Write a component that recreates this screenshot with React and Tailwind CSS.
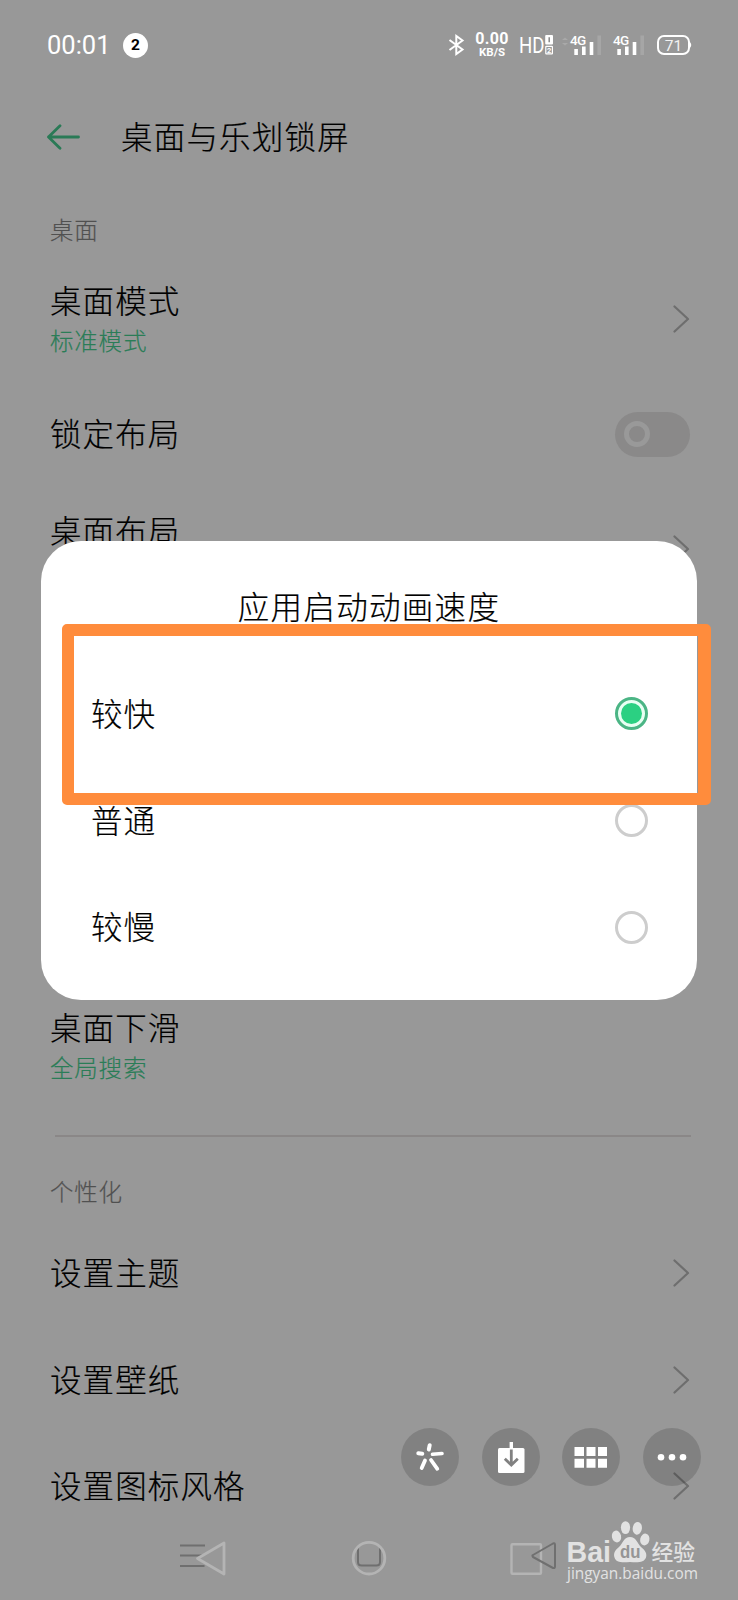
import React from "react";

const options = [
  { label: "较快", checked: true },
  { label: "普通", checked: false },
  { label: "较慢", checked: false },
];

const personalRows = ["设置主题", "设置壁纸", "设置图标风格"];

const Chevron = () => (
  <svg width="17" height="28" viewBox="0 0 17 28" fill="none" className="mr-[1px] shrink-0">
    <path d="M1.5 1.5 L15 14 L1.5 26.5" stroke="#6e6e6e" strokeWidth="2.2" strokeLinecap="round" strokeLinejoin="round" />
  </svg>
);

const Signal = ({ faint }) => (
  <svg width="33" height="22" viewBox="0 0 33 22" fill="#fff" className="overflow-visible shrink-0">
    {faint && <path d="M-8 6 l3 -2.5 l3 2.5z M-8 9 l3 2.5 l3 -2.5z" fill="#a9a9a9" />}
    <text x="0" y="11" fontSize="13.5" fontFamily="Roboto" fontWeight="500" letterSpacing="-0.6">4G</text>
    <rect x="4.3" y="15" width="3.6" height="6" />
    <rect x="12" y="12.5" width="3.6" height="8.5" />
    <rect x="19.7" y="8" width="3.6" height="13" />
    <rect x="27.4" y="1.5" width="3.6" height="19.5" fill="#a6a6a6" />
  </svg>
);

const StatusBar = () => (
  <div className="flex h-[90px] items-center pl-[47px] pr-[46px] font-[Roboto] font-normal text-white">
    <span className="mt-[2px] w-[76px] text-[25.5px] leading-none">00:01</span>
    <span className="flex h-[25px] w-[25px] items-center justify-center rounded-full bg-white pt-[1px] text-[15.5px] font-bold leading-none text-black">
      2
    </span>
    <div className="ml-auto flex items-center">
      <svg width="17" height="22" viewBox="0 0 17 22" fill="none" stroke="#fff" strokeWidth="2" strokeLinejoin="miter">
        <path d="M1.5 6 L14.5 15.5 L8.3 20 V2 L14.5 6.5 L1.5 16" />
      </svg>
      <div className="ml-[10px] w-[34px] text-center font-bold leading-none">
        <div className="text-[16px] leading-[13px] tracking-[0.3px]">0.00</div>
        <div className="mt-[2px] text-[11.5px] leading-[11px]">KB/S</div>
      </div>
      <svg width="35" height="22" viewBox="0 0 35 22" fill="#fff" className="ml-[10px] overflow-visible">
        <text x="0" y="19" fontSize="22" fontFamily="Roboto" textLength="25.5" lengthAdjust="spacingAndGlyphs">HD</text>
        <rect x="26.2" y="1" width="7.8" height="9.5" rx="1" />
        <rect x="26.8" y="12.3" width="6.6" height="7.6" rx="0.5" fill="none" stroke="#fff" strokeWidth="1.2" />
        <path d="M30.2 3.2 V8.2" stroke="#808080" strokeWidth="1.4" />
        <text x="28.1" y="19" fontSize="7.5" fontFamily="Roboto" fontWeight="700">2</text>
      </svg>
      <div className="ml-[16px] flex gap-[10px]">
        <Signal faint />
        <Signal />
      </div>
      <svg width="35" height="20" viewBox="0 0 35 20" fill="none" className="ml-[11px]">
        <rect x="1" y="1" width="31" height="18" rx="6" stroke="#fff" strokeWidth="2" />
        <path d="M32.5 6.5 Q36 10 32.5 13.5z" fill="#fff" />
        <text x="16.4" y="15.5" fontSize="15.5" fontFamily="Roboto" fontWeight="400" textAnchor="middle" fill="#f2f2f2">71</text>
      </svg>
    </div>
  </div>
);

const SettingRow = ({ title, value, className, children }) => (
  <div className={"flex items-center justify-between pl-[50px] pr-[47px] " + className}>
    <div>
      <div className="-mt-[2px] mb-[2px] text-[31.5px] leading-[42px] tracking-[1.1px]">{title}</div>
      {value && <div className="text-[23.5px] leading-[36px] tracking-[0.8px] text-[#2a7d57]">{value}</div>}
    </div>
    {children}
  </div>
);

const Toggle = () => (
  <div className="mr-[1px] flex h-[45px] w-[75px] items-center rounded-full bg-[#8a8989] pl-[9px]">
    <div className="h-[26px] w-[26px] rounded-full border-[5px] border-[#999]"></div>
  </div>
);

const Radio = ({ checked }) =>
  checked ? (
    <div className="mb-[1px] flex h-[33px] w-[33px] items-center justify-center rounded-full border-[3px] border-[#4bb585] bg-[#e8fff3]">
      <div className="h-[21px] w-[21px] rounded-full bg-[#2bd082]"></div>
    </div>
  ) : (
    <div className="h-[33px] w-[33px] rounded-full border-[3px] border-[#cdcdcd]"></div>
  );

const SpeedDialog = () => (
  <div className="absolute left-[41px] top-[541px] h-[459px] w-[656px] rounded-[40px] bg-white pt-[43px]">
    <h2 className="text-center text-[31.5px] font-light leading-[42px] tracking-[1.3px]">应用启动动画速度</h2>
    <div className="mt-[35px]">
      {options.map((option) => (
        <div key={option.label} className="flex h-[106.5px] items-center justify-between pl-[50px] pr-[49px]">
          <span className="-mt-[2px] mb-[2px] text-[31.5px] leading-[42px] tracking-[1.1px]">{option.label}</span>
          <Radio checked={option.checked} />
        </div>
      ))}
    </div>
  </div>
);

const FloatingButton = ({ children }) => (
  <button className="flex h-[58px] w-[58px] items-center justify-center rounded-full bg-black/15">
    <svg width="34" height="34" viewBox="0 0 34 34" fill="#fff">
      {children}
    </svg>
  </button>
);

const FloatingTools = () => (
  <div className="absolute left-[401px] top-[1428px] flex gap-[22.6px]">
    <FloatingButton>
      <g stroke="#fff" strokeLinecap="round">
        <path d="M16.7 5.2 L15.8 9.5" strokeWidth="4" />
        <path d="M5.3 13.2 L9.3 13.8" strokeWidth="4" />
        <path d="M19.5 14.3 L29 13.5" strokeWidth="3.6" />
        <path d="M12 20.5 L8.7 28" strokeWidth="3.8" />
        <path d="M18 20 L24.3 28.8" strokeWidth="3.8" />
      </g>
    </FloatingButton>
    <FloatingButton>
      <rect x="4" y="8" width="26.5" height="25" rx="1.5" />
      <rect x="15.6" y="2" width="3.4" height="8" />
      <path d="M17.3 9.5 V25 M10.8 18.8 L17.3 25 L23.8 18.8" fill="none" stroke="#818181" strokeWidth="2.8" />
    </FloatingButton>
    <FloatingButton>
      <path d="M0.5 7h9.5v9H0.5z M12.5 7h9v9h-9z M24 7h9v9h-9z M0.5 18.7h9.5v9H0.5z M12.5 18.7h9v9h-9z M24 18.7h9v9h-9z" />
    </FloatingButton>
    <FloatingButton>
      <circle cx="6" cy="17.3" r="3.3" />
      <circle cx="17" cy="17.3" r="3.3" />
      <circle cx="28" cy="17.3" r="3.3" />
    </FloatingButton>
  </div>
);

const NavBar = () => (
  <div className="absolute left-[179px] top-[1538px] flex items-center">
    <svg width="48" height="40" viewBox="0 0 48 40" fill="none">
      <path d="M1 7.5h25 M1 17.5h23 M1 28h24.5" stroke="#6f6f6f" strokeWidth="1.8" />
      <path d="M18.5 20.5 L45 5 V36z" fill="#989898" stroke="#b4b4b4" strokeWidth="2.8" strokeLinejoin="round" />
    </svg>
    <svg width="36" height="40" viewBox="0 0 36 40" fill="none" className="ml-[124px]">
      <path d="M7 9 V24 Q7 27.5 10.5 27.5 H25.5 Q29 27.5 29 24 V9" stroke="#6f6f6f" strokeWidth="2" />
      <circle cx="18" cy="20.2" r="15.8" stroke="#b4b4b4" strokeWidth="2.8" />
    </svg>
    <svg width="48" height="40" viewBox="0 0 48 40" fill="none" className="ml-[123px]">
      <rect x="1.5" y="6.2" width="29.5" height="29.5" rx="1" stroke="#b4b4b4" strokeWidth="2.4" />
      <path d="M23 17 Q21.8 17 23 19 L43 30 Q45 30.5 45 28.5 V7 Q45 4.5 43 5.5z" stroke="#707070" strokeWidth="2" strokeLinejoin="round" />
    </svg>
  </div>
);

const Watermark = () => (
  <div className="absolute left-[566px] top-[1519px] h-[66px] w-[135px] text-[#e2e2e2]">
    <svg width="135" height="46" viewBox="0 0 135 46" fill="#e2e2e2" className="overflow-visible">
      <text x="0.5" y="43" fontSize="29.5" fontFamily="Liberation Sans" fontWeight="700" textLength="44.5" lengthAdjust="spacingAndGlyphs">Bai</text>
      <ellipse cx="50.5" cy="17.5" rx="4.6" ry="6" transform="rotate(-12 50.5 17.5)" />
      <ellipse cx="59.5" cy="8.6" rx="4.6" ry="6.4" />
      <ellipse cx="71.3" cy="9.3" rx="4.6" ry="6.4" transform="rotate(8 71.3 9.3)" />
      <ellipse cx="78.8" cy="20.5" rx="4.6" ry="6" transform="rotate(12 78.8 20.5)" />
      <path d="M64 18 C58 18 57 24 53 28 C48 32 47.5 35 48.5 38.5 C50 43.5 55 43.5 64 43 C73 43.5 78 43.5 80 38.5 C81 35 80 32 75 28 C71 24 70 18 64 18z" />
      <text x="54" y="39" fontSize="18" fontFamily="Liberation Sans" fontWeight="700" fill="#959595" textLength="20.5" lengthAdjust="spacingAndGlyphs">du</text>
      <text x="85.5" y="40.5" fontSize="22" fontFamily="Noto Sans CJK SC" fontWeight="500" textLength="43.5" lengthAdjust="spacingAndGlyphs">经验</text>
    </svg>
    <div className="pl-[1px] font-['Open_Sans'] text-[15.4px] font-medium leading-[18px]">jingyan.baidu.com</div>
  </div>
);

function App() {
  return (
    <div className="relative h-[1600px] w-[738px] overflow-hidden bg-[#989898] font-['Noto_Sans_CJK_SC',sans-serif] font-light text-black">
      <StatusBar />
      <div className="[-webkit-text-stroke:0.2px]">
        <header className="flex h-[94px] items-center pl-[47px]">
          <svg width="33" height="26" viewBox="0 0 33 26" fill="none" stroke="#2a7a56" strokeWidth="2.8" strokeLinecap="round" strokeLinejoin="round">
            <path d="M31.5 13 H1.5 M13 1.8 L1.5 13 L13 24.2" />
          </svg>
          <h1 className="-mt-[2px] mb-[2px] ml-[41px] text-[31.5px] leading-[42px] tracking-[1.2px] font-light">桌面与乐划锁屏</h1>
        </header>
        <div className="mt-[6px] flex h-[80px] items-center pl-[50px] text-[23.5px] tracking-[0.8px] text-[#505050]">桌面</div>
        <SettingRow title="桌面模式" value="标准模式" className="h-[98px]">
          <Chevron />
        </SettingRow>
        <SettingRow title="锁定布局" className="h-[132px]">
          <Toggle />
        </SettingRow>
        <SettingRow title="桌面布局" value={"\u00a0"} className="h-[98px]">
          <Chevron />
        </SettingRow>
        <SettingRow title="桌面下滑" value="全局搜索" className="mt-[399px] h-[98px]" />
        <div className="ml-[55px] mr-[47px] mt-[40px] h-[2px] bg-[#8a8787]"></div>
        <div className="mt-[15px] flex h-[80px] items-center pl-[50px] text-[23.5px] tracking-[0.8px] text-[#505050]">个性化</div>
        <div className="mt-[-12px]">
          {personalRows.map((title) => (
            <SettingRow key={title} title={title} className="h-[106.5px]">
              <Chevron />
            </SettingRow>
          ))}
        </div>
        <SpeedDialog />
      </div>
      {/* highlight frame around the first option */}
      <div className="absolute left-[62px] top-[624px] h-[181px] w-[649px] rounded-[5px] border-[12px] border-r-[13px] border-[#ff8c3c]"></div>
      <FloatingTools />
      <NavBar />
      <Watermark />
    </div>
  );
}

export default App;
